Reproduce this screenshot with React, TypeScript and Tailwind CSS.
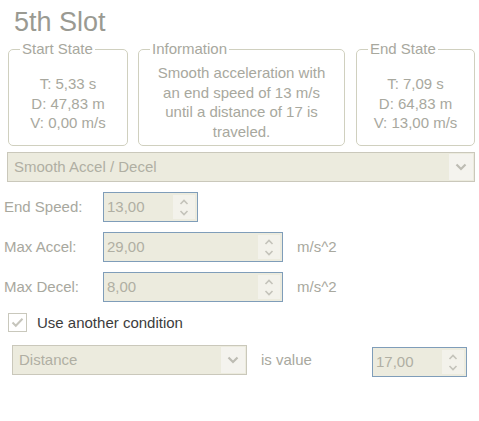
const Chevron = ({ up = false, big = false }: { up?: boolean; big?: boolean }) =>
  big ? (
    <svg width="12" height="8" viewBox="0 0 12 8">
      <path d="M1.5 1.5 L6 6 L10.5 1.5" fill="none" stroke="#bdbcb3" strokeWidth="2.2" />
    </svg>
  ) : (
    <svg width="10" height="6" viewBox="0 0 10 6">
      <path
        d={up ? "M1.5 5 L5 1.5 L8.5 5" : "M1.5 1 L5 4.5 L8.5 1"}
        fill="none"
        stroke="#c4c3ba"
        strokeWidth="1.6"
      />
    </svg>
  );

const Spinner = ({ value, className = "" }: { value: string; className?: string }) => (
  <div className={`flex h-[30px] border border-[#7f9db9] bg-[#ecebde] p-[2px] ${className}`}>
    <span className="flex-1 pl-[1px] leading-[24px] text-[#b0afa3]">{value}</span>
    <div className="flex w-[22px] flex-col items-center justify-center gap-[5px] bg-[#f3f2eb]">
      <Chevron up />
      <Chevron />
    </div>
  </div>
);

const Combo = ({ value, className = "" }: { value: string; className?: string }) => (
  <div className={`flex h-[30px] border border-[#cac8bb] bg-[#ecebde] p-[1px] ${className}`}>
    <span className="flex-1 pl-[5px] leading-[26px] text-[#b0afa3]">{value}</span>
    <div className="flex w-[24px] items-center justify-center bg-[#f4f3ee]">
      <Chevron big />
    </div>
  </div>
);

const GroupBox = ({
  title,
  lines,
  className,
  padTop,
}: {
  title: string;
  lines: string[];
  className: string;
  padTop: string;
}) => (
  <fieldset className={`h-[105px] rounded-[5px] border border-[#d0d0bf] ${className}`}>
    <legend className="ml-[11px] px-[2px] leading-[16px] text-[#a8a89e]">{title}</legend>
    <div className={`text-center leading-[19.5px] text-[#a8a89e] ${padTop}`}>
      {lines.map((line) => (
        <div key={line}>{line}</div>
      ))}
    </div>
  </fieldset>
);

export default function App() {
  return (
    <div className="h-[421px] w-[479px] bg-white text-[15px] font-['Liberation_Sans',Arial,sans-serif]">
      <h1 className="pl-[14px] pt-[7px] text-[27px] leading-[31px] text-[#9a9a92]">5th Slot</h1>

      <div className="mt-[3px] flex pl-[8px]">
        <GroupBox
          title="Start State"
          lines={["T: 5,33 s", "D: 47,83 m", "V: 0,00 m/s"]}
          className="w-[120px]"
          padTop="pt-[17px]"
        />
        <GroupBox
          title="Information"
          lines={[
            "Smooth acceleration with",
            "an end speed of 13 m/s",
            "until a distance of 17 is",
            "traveled.",
          ]}
          className="ml-[10px] w-[207px]"
          padTop="pt-[6px]"
        />
        <GroupBox
          title="End State"
          lines={["T: 7,09 s", "D: 64,83 m", "V: 13,00 m/s"]}
          className="ml-[11px] w-[119px]"
          padTop="pt-[17px]"
        />
      </div>

      <Combo value="Smooth Accel / Decel" className="ml-[7px] mt-[6px] w-[468px]" />

      <div className="mt-[10px] flex flex-col gap-[10px]">
        <div className="flex items-center">
          <span className="w-[103px] pl-[4px] leading-[30px] text-[#a8a89e]">End Speed:</span>
          <Spinner value="13,00" className="w-[95px]" />
        </div>
        <div className="flex items-center">
          <span className="w-[103px] pl-[4px] leading-[30px] text-[#a8a89e]">Max Accel:</span>
          <Spinner value="29,00" className="w-[180px]" />
          <span className="ml-[14px] text-[#a8a89e]">m/s^2</span>
        </div>
        <div className="flex items-center">
          <span className="w-[103px] pl-[4px] leading-[30px] text-[#a8a89e]">Max Decel:</span>
          <Spinner value="8,00" className="w-[180px]" />
          <span className="ml-[14px] text-[#a8a89e]">m/s^2</span>
        </div>
      </div>

      <label className="ml-[8px] mt-[11px] flex items-center">
        <span className="flex h-[19px] w-[19px] items-center justify-center border border-[#c9c8bc] bg-white">
          <svg width="13" height="11" viewBox="0 0 13 11">
            <path d="M1.5 5.5 L4.8 8.8 L11.5 1.8" fill="none" stroke="#c6c5bc" strokeWidth="2" />
          </svg>
        </span>
        <span className="ml-[10px] leading-[19px] text-[#3c3c3c]">Use another condition</span>
      </label>

      <div className="mt-[13px] flex items-start pl-[12px]">
        <Combo value="Distance" className="w-[235px]" />
        <span className="ml-[14px] w-[111px] leading-[30px] text-[#a8a89e]">is value</span>
        <Spinner value="17,00" className="mt-[2px] w-[95px]" />
      </div>
    </div>
  );
}
